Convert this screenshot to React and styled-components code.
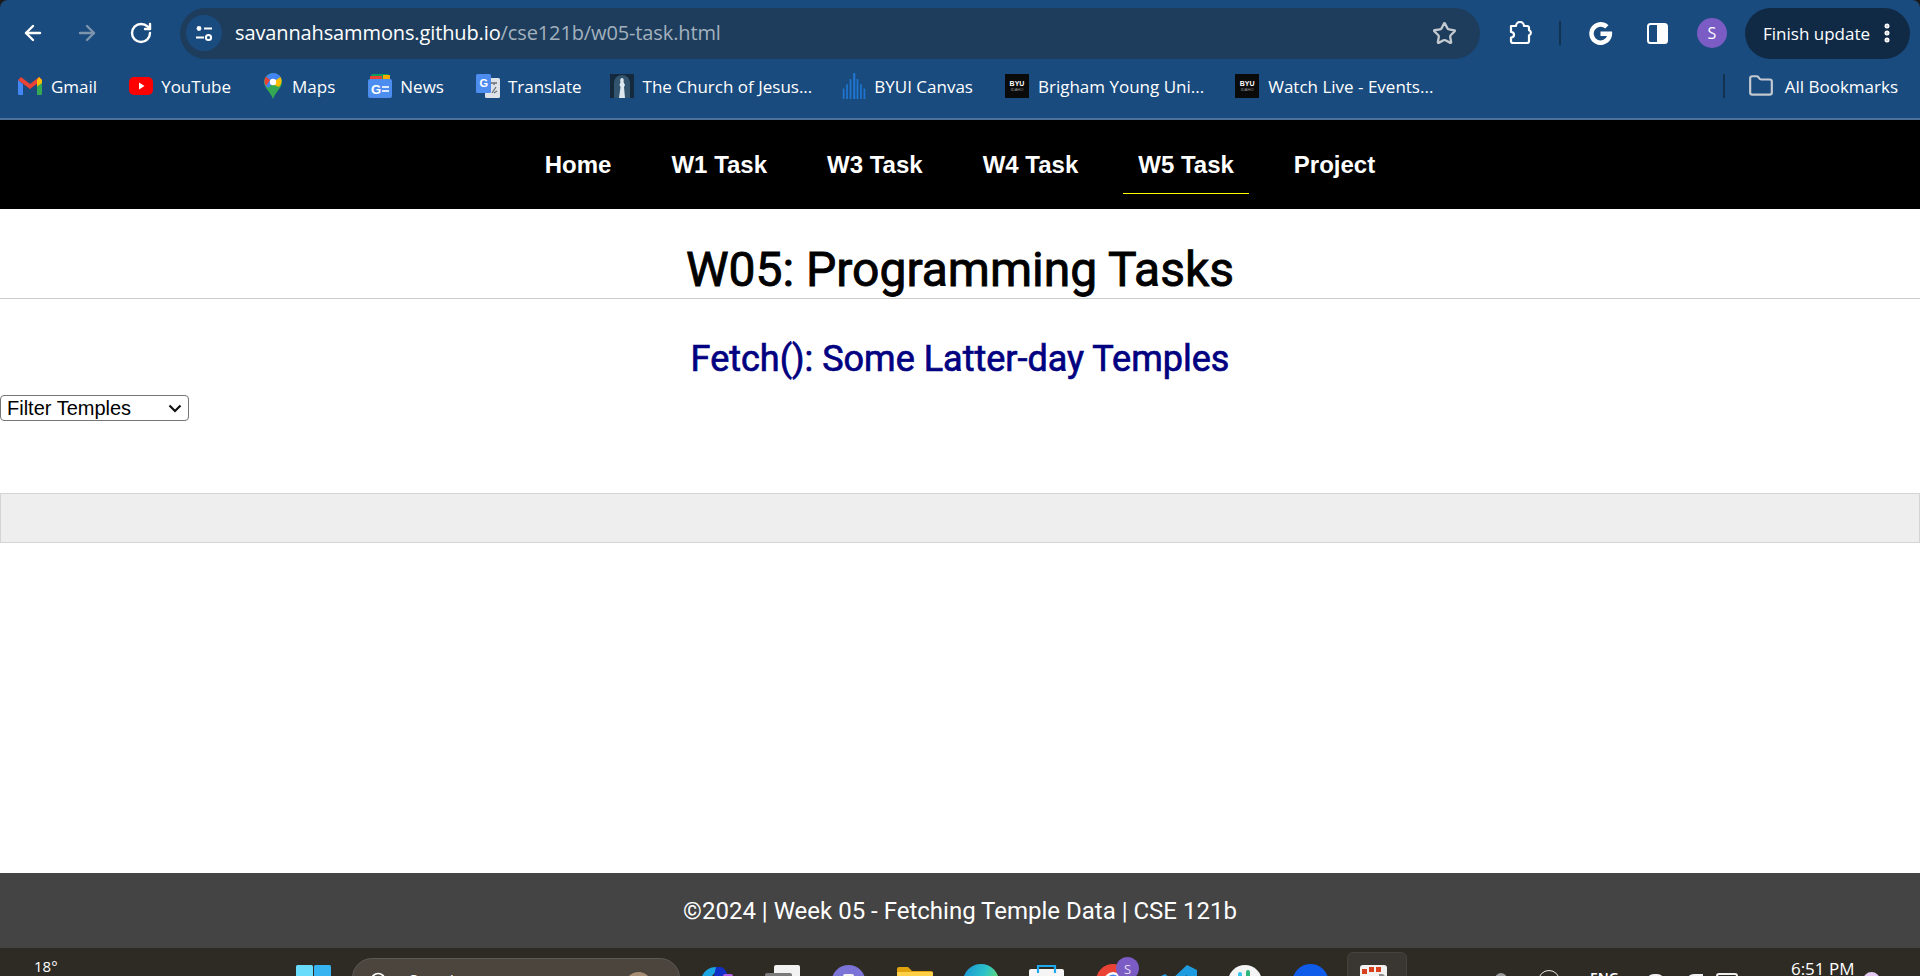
import React from 'react';
import styled, { createGlobalStyle } from 'styled-components';
import { ArrowLeft, ArrowRight, RotateCw, Star, Folder, EllipsisVertical, Search } from 'lucide-react';

const GlobalStyle = createGlobalStyle`
  html, body { margin: 0; padding: 0; height: 100%; overflow: hidden; background: #fff; }
  #root { height: 100%; }
`;

const Page = styled.div`
  height: 976px;
  display: flex;
  flex-direction: column;
  overflow: hidden;
  background: #1b1b1b;
  font-family: "Liberation Sans", Arial, sans-serif;
`;

const BrowserChrome = styled.div`
  height: 120px;
  flex: none;
  box-sizing: border-box;
  background: #1a4b7e;
  border-bottom: 2px solid #4d7098;
  border-radius: 8px 8px 0 0;
  font-family: "Open Sans", sans-serif;
  color: #fff;
`;

const Toolbar = styled.div`
  height: 66px;
  display: flex;
  align-items: center;
  padding: 0 10px 0 21px;
`;

const NavButtons = styled.div`
  display: flex;
  align-items: center;
  gap: 30px;
  width: 159px;
  flex: none;
`;

const Omnibox = styled.div`
  width: 1300px;
  height: 51px;
  flex: none;
  display: flex;
  align-items: center;
  background: #1e3d5c;
  border-radius: 26px;
  padding: 0 23px 0 6px;
  box-sizing: border-box;
  font-size: 20px;
`;

const SiteButton = styled.div`
  width: 36px;
  height: 36px;
  border-radius: 50%;
  background: #1a4b7e;
  display: flex;
  align-items: center;
  justify-content: center;
  margin: 0 13px 0 0;
`;

const Url = styled.div`
  flex: 1;
  letter-spacing: -0.12px;
  margin-top: -2px;
`;

const UrlPath = styled.span`
  color: #a3b1be;
`;

const ToolIcons = styled.div`
  display: flex;
  align-items: center;
  flex: 1;
`;

const ToolSlot = styled.div`
  display: flex;
  margin-left: ${p => p.$ml}px;
`;

const Divider = styled.div`
  width: 2px;
  height: ${p => p.$h}px;
  background: #123252;
  margin-left: ${p => p.$ml};
`;

const Avatar = styled.div`
  width: 30px;
  height: 30px;
  border-radius: 50%;
  background: #7b5cc4;
  font-size: 16px;
  display: flex;
  align-items: center;
  justify-content: center;
  margin-left: 29px;
`;

const UpdatePill = styled.div`
  width: 165px;
  height: 51px;
  margin-left: 18px;
  border-radius: 26px;
  background: #102a46;
  display: flex;
  align-items: center;
  padding-left: 18px;
  box-sizing: border-box;
  font-size: 17px;
  white-space: nowrap;
`;

const BookmarkBar = styled.div`
  height: 44px;
  display: flex;
  align-items: center;
  padding: 0 22px 0 18px;
  font-size: 17px;
  margin-top: -2px;
`;

const Bookmark = styled.div`
  display: flex;
  align-items: center;
  gap: ${p => p.$gap}px;
  margin-right: ${p => p.$mr}px;
  margin-left: ${p => p.$ml || 0}px;
  white-space: nowrap;
`;

const SiteNav = styled.nav`
  height: 89px;
  flex: none;
  background: #000;
  display: flex;
  justify-content: center;
`;

const NavList = styled.div`
  display: flex;
  gap: 30px;
`;

const NavLink = styled.a`
  height: 66px;
  margin-top: 8px;
  padding: 8px 15px 0;
  box-sizing: border-box;
  display: flex;
  align-items: center;
  color: #fff;
  font-weight: 700;
  font-size: 24px;
  border-bottom: ${p => (p.$active ? '1px solid #ffff00' : '0')};
`;

const Content = styled.main`
  flex: 1;
  min-height: 0;
  background: #fff;
  font-family: Roboto, sans-serif;
`;

const Heading = styled.h1`
  margin: 0;
  height: 90px;
  box-sizing: border-box;
  border-bottom: 1px solid #ccc;
  padding-top: 33px;
  text-align: center;
  font-size: 48px;
  line-height: 56px;
  font-weight: 400;
  color: #000;
  -webkit-text-stroke: 0.9px #000;
`;

const SubHeading = styled.h2`
  margin: 0;
  padding-top: 39px;
  text-align: center;
  font-size: 36px;
  line-height: 42px;
  font-weight: 400;
  color: #000080;
  -webkit-text-stroke: 0.7px #000080;
`;

const FilterSelect = styled.select`
  display: block;
  margin: 15px 0 0;
  width: 189px;
  height: 26px;
  appearance: none;
  font-family: "Liberation Sans", Arial, sans-serif;
  font-size: 20px;
  color: #000;
  border: 1px solid #767676;
  border-radius: 4px;
  padding: 0 0 0 6px;
  background: #fff url("data:image/svg+xml,%3Csvg xmlns='http://www.w3.org/2000/svg' width='14' height='9'%3E%3Cpath d='M1.5 1.5 7 7l5.5-5.5' fill='none' stroke='%23111' stroke-width='2.2'/%3E%3C/svg%3E") no-repeat right 6px center;
`;

const TempleBox = styled.div`
  margin-top: 72px;
  height: 50px;
  box-sizing: border-box;
  background: #eee;
  border: 1px solid #d4d4d4;
`;

const Footer = styled.footer`
  height: 75px;
  flex: none;
  background: #444;
  color: #fff;
  font-family: Roboto, sans-serif;
  font-size: 24px;
  display: flex;
  align-items: center;
  justify-content: center;
`;

const Taskbar = styled.div`
  height: 28px;
  flex: none;
  background: #2e2a24;
  color: #fff;
  font-family: "Open Sans", sans-serif;
  display: flex;
  align-items: flex-start;
  overflow: hidden;
`;

const Weather = styled.div`
  width: 296px;
  flex: none;
  padding: 10px 0 0 34px;
  box-sizing: border-box;
  font-size: 15px;
  line-height: 16px;
`;

const SearchPill = styled.div`
  width: 328px;
  height: 40px;
  margin: 10px 0 0 21px;
  flex: none;
  box-sizing: border-box;
  border: 1px solid #5d5a55;
  border-radius: 20px;
  background: #4b453e;
  display: flex;
  align-items: flex-start;
  padding: 12px 0 0 16px;
  gap: 20px;
  font-size: 16px;
  line-height: 20px;
`;

const SearchArt = styled.div`
  width: 27px;
  height: 27px;
  margin: 1px 27px 0 auto;
  border-radius: 50%;
  background: #a58e73;
`;

const TaskIcon = styled.div`
  width: ${p => p.$w}px;
  height: 36px;
  flex: none;
  margin-top: ${p => p.$top}px;
  margin-left: ${p => p.$ml}px;
  position: relative;
`;

const ActiveTile = styled.div`
  width: 60px;
  height: 40px;
  flex: none;
  margin: 4px 0 0 ${p => p.$ml}px;
  box-sizing: border-box;
  padding: 12px 0 0 12px;
  background: #3a3733;
  border: 1px solid #45423e;
  border-radius: 6px;
`;

const Badge = styled.div`
  position: absolute;
  left: 20px;
  top: -7px;
  width: 23px;
  height: 23px;
  border-radius: 50%;
  background: #7b5cc4;
  color: #e8def8;
  font-size: 13px;
  display: flex;
  align-items: center;
  justify-content: center;
`;

const TrayText = styled.div`
  flex: none;
  font-size: 14px;
  font-weight: 600;
  line-height: 18px;
  margin: 21px 0 0 ${p => p.$ml}px;
`;

const Clock = styled.div`
  flex: none;
  margin: 12px 0 0 ${p => p.$ml}px;
  font-size: 17px;
  line-height: 18px;
`;

const Gmail = () => (
  <svg width="24" height="20" viewBox="0 0 24 18">
    <path d="M0 3v13.5A1.5 1.5 0 0 0 1.5 18H5V7z" fill="#4285f4" />
    <path d="M24 3v13.5a1.5 1.5 0 0 1-1.5 1.5H19V7z" fill="#34a853" />
    <path d="M0 3l12 9 12-9-3-3-9 7-9-7z" fill="#ea4335" />
    <path d="M21 0l3 3v3l-5 3.5V3z" fill="#fbbc04" />
  </svg>
);

const YouTube = () => (
  <svg width="24" height="20" viewBox="0 0 24 20">
    <rect y="1" width="24" height="18" rx="5" fill="#f00" />
    <path d="M10 6.5v7l5.5-3.5z" fill="#fff" />
  </svg>
);

const Maps = () => (
  <svg width="18" height="26" viewBox="0 0 18 26">
    <path d="M9 0a9 9 0 0 1 9 9c0 6-6 9-9 17C6 18 0 15 0 9a9 9 0 0 1 9-9z" fill="#34a853" />
    <path d="M9 0a9 9 0 0 1 7.5 4L4 15 1.5 12.5A9 9 0 0 1 9 0z" fill="#4285f4" />
    <path d="M1.8 3.6L6 7 2 13C0 10 0 6 1.8 3.6z" fill="#ea4335" />
    <path d="M16.5 4A9 9 0 0 1 15 14L10 12 12 7z" fill="#fbbc04" />
    <circle cx="9" cy="9" r="3.2" fill="#fff" />
  </svg>
);

const News = () => (
  <svg width="24" height="24" viewBox="0 0 24 24">
    <rect x="3" y="0" width="18" height="6" rx="1.5" fill="#0c9d58" />
    <rect x="15" y="1" width="7" height="6" fill="#f9ab00" />
    <rect x="2" y="2" width="12" height="5" fill="#ea4335" />
    <rect y="5" width="24" height="19" rx="2" fill="#4d8df0" />
    <text x="3" y="20" fontFamily="Liberation Sans" fontWeight="700" fontSize="13" fill="#fff">G</text>
    <path d="M14 12h7v2h-7zm0 4h7v2h-7z" fill="#dbe8fd" />
  </svg>
);

const Translate = () => (
  <svg width="24" height="24" viewBox="0 0 24 24">
    <rect x="9" y="4" width="15" height="20" rx="1.5" fill="#dfe3e8" />
    <rect width="15" height="19" rx="1.5" fill="#4d8df0" />
    <text x="3.5" y="13" fontFamily="Liberation Sans" fontWeight="700" fontSize="11" fill="#fff">G</text>
    <path d="M15 9h6M18 9v2m-2 8l4-6m-2 6l3-2" stroke="#66707a" fill="none" strokeWidth="1.3" />
  </svg>
);

const Church = () => (
  <svg width="24" height="24" viewBox="0 0 24 24">
    <rect width="24" height="24" fill="#15293d" />
    <path d="M4 24V9a8 8 0 0 1 16 0v15z" fill="#33546f" />
    <path d="M12 4c2 0 2 3 1.5 4l1.5 3-1 2 1 11H9l1.5-11-1-2 1-3C10 7 10 4 12 4z" fill="#dfe8ee" />
  </svg>
);

const Canvas = () => (
  <svg width="24" height="26" viewBox="0 0 26 30" fill="#1f75cf">
    <rect x="0" y="18" width="2" height="12" />
    <rect x="4" y="13" width="2" height="17" />
    <rect x="8" y="7" width="2" height="23" />
    <rect x="12" y="0" width="2.5" height="30" />
    <rect x="16" y="7" width="2" height="23" />
    <rect x="20" y="13" width="2" height="17" />
    <rect x="24" y="18" width="2" height="12" />
  </svg>
);

const ByuTile = styled.div`
  width: 24px;
  height: 24px;
  background: #0a0a0a;
  display: flex;
  flex-direction: column;
  align-items: center;
  justify-content: center;
  font-family: "Liberation Sans", sans-serif;
  font-weight: 700;
  font-size: 7px;
  line-height: 7px;
`;

const ByuSmall = styled.span`
  font-size: 4px;
  line-height: 5px;
  font-weight: 400;
  color: #999;
`;

const Byu = () => (
  <ByuTile>
    BYU
    <ByuSmall>IDAHO</ByuSmall>
  </ByuTile>
);

const Tune = () => (
  <svg width="20" height="20" viewBox="0 0 20 20" fill="none" stroke="#fff" strokeWidth="2">
    <path d="M10 5.5h8M2 14.5h8" />
    <circle cx="5" cy="5.5" r="2.4" fill="#fff" stroke="none" />
    <circle cx="14.5" cy="14.5" r="2.6" />
  </svg>
);

const ExtensionPuzzle = () => (
  <svg width="25" height="24" viewBox="0 0 25 24" fill="none" stroke="#fff" strokeWidth="2.2" strokeLinejoin="round">
    <path d="M3 5.5h5a4 4 0 0 1 8 0h3a2 2 0 0 1 2 2v2.2a2.6 2.6 0 0 1 0 5v5.8a2 2 0 0 1-2 2H5a2 2 0 0 1-2-2v-3.5c2 0 3-1.2 3-2.7s-1-2.8-3-2.8z" transform="translate(0 -0.5)" />
  </svg>
);

const GoogleG = () => (
  <svg width="25" height="25" viewBox="0 0 24 24">
    <path d="M23 10H12v4.4h6.3a6.6 6.6 0 1 1-1.8-7.2l3.2-3.2A11 11 0 1 0 23.2 12c0-.7 0-1.4-.2-2z" fill="#fff" />
  </svg>
);

const SidePanel = () => (
  <svg width="21" height="21" viewBox="0 0 21 21">
    <rect x="1" y="1" width="19" height="19" rx="2.5" fill="none" stroke="#fff" strokeWidth="2" />
    <rect x="10" y="1" width="10" height="19" rx="1" fill="#fff" />
  </svg>
);

const WinLogo = () => (
  <svg width="35" height="36" viewBox="0 0 35 36">
    <rect width="17" height="17" rx="1.5" fill="#69dcfb" />
    <rect x="18" width="17" height="17" rx="1.5" fill="#36b4f2" />
    <rect y="18" width="17" height="17" fill="#2ba7e8" />
    <rect x="18" y="18" width="17" height="17" fill="#0f7fd0" />
  </svg>
);

const Copilot = () => (
  <svg width="31" height="36" viewBox="0 0 31 36">
    <path d="M0 9C3 3 8 0 14 0h4L10 9z" fill="#1ba4e0" />
    <path d="M14 0h4c3 0 6 3 8 9H12z" fill="#1230c8" />
    <rect x="21" y="7" width="10" height="8" rx="2" fill="#b05be0" />
  </svg>
);

const Notepad = () => (
  <svg width="35" height="36" viewBox="0 0 35 36">
    <rect x="9" width="26" height="36" rx="2" fill="#f2f2f2" />
    <rect y="8" width="27" height="28" rx="2" fill="#7a7a7a" />
  </svg>
);

const Teams = () => (
  <svg width="33" height="36" viewBox="0 0 33 36">
    <circle cx="16.5" cy="17" r="17" fill="#7b74d6" />
    <rect x="11" y="9" width="11" height="12" rx="2" fill="#f2f2f2" />
  </svg>
);

const FolderApp = () => (
  <svg width="36" height="36" viewBox="0 0 36 36">
    <path d="M0 3a2 2 0 0 1 2-2h9l4 4h19a2 2 0 0 1 2 2v29H0z" fill="#e0a30e" />
    <rect y="6" width="36" height="30" rx="1" fill="#ffcf48" />
  </svg>
);

const EdgeApp = () => (
  <svg width="36" height="36" viewBox="0 0 36 36">
    <defs>
      <linearGradient id="edge" x1="0" x2="1" y1="0" y2="0.4">
        <stop offset="0" stopColor="#1a8fd6" />
        <stop offset="0.6" stopColor="#2bc3c9" />
        <stop offset="1" stopColor="#66dd70" />
      </linearGradient>
    </defs>
    <circle cx="18" cy="18" r="18" fill="url(#edge)" />
  </svg>
);

const StoreApp = () => (
  <svg width="35" height="36" viewBox="0 0 35 36">
    <rect y="4" width="35" height="32" rx="2" fill="#f5f5f5" />
    <path d="M9 8V1h17v7" fill="none" stroke="#1ea9ee" strokeWidth="2.2" />
  </svg>
);

const ChromeApp = () => (
  <svg width="34" height="36" viewBox="0 0 34 36">
    <circle cx="17" cy="17" r="17" fill="#ea4335" />
    <circle cx="17" cy="17" r="9" fill="#fff" />
    <circle cx="17" cy="17" r="6.5" fill="#4285f4" />
  </svg>
);

const VsCode = () => (
  <svg width="36" height="36" viewBox="0 0 36 36">
    <path d="M26 0l10 5v26l-10 5-15-14-7 5-4-2 8-7-8-7 4-2 7 5zm0 10l-8 7 8 7z" fill="#1f9be0" />
  </svg>
);

const Slack = () => (
  <svg width="34" height="36" viewBox="0 0 34 36">
    <circle cx="17" cy="17" r="17" fill="#f4f4f4" />
    <rect x="10" y="7" width="4" height="9" rx="2" fill="#36c5f0" />
    <rect x="18" y="5" width="4" height="10" rx="2" fill="#2eb67d" />
  </svg>
);

const BlueApp = () => (
  <svg width="35" height="36" viewBox="0 0 35 36">
    <circle cx="17.5" cy="18" r="18" fill="#0f5bea" />
  </svg>
);

const SnipApp = () => (
  <svg width="27" height="30" viewBox="0 0 27 30">
    <rect width="27" height="30" rx="3" fill="#f2f2f2" />
    <rect x="2" y="4" width="5" height="5" fill="#d9401e" />
    <rect x="9" y="2" width="5" height="5" fill="#d9401e" />
    <rect x="16" y="2" width="5" height="5" fill="#d9401e" />
    <rect x="2" y="11" width="5" height="5" fill="#d9401e" />
    <path d="M19 9h4l4 4v17h-8z" fill="#8d8d8d" />
  </svg>
);

const TrayDot = styled.div`
  width: ${p => p.$size}px;
  height: ${p => p.$size}px;
  flex: none;
  border-radius: 50%;
  margin: ${p => p.$top}px 0 0 ${p => p.$ml}px;
  background: ${p => p.$bg};
  border: ${p => (p.$ring ? '1.5px solid #e8e8e8' : '0')};
  box-sizing: border-box;
`;

const TrayBox = styled.div`
  width: ${p => p.$w}px;
  height: 14px;
  flex: none;
  margin: ${p => p.$top}px 0 0 ${p => p.$ml}px;
  border: 2px solid #f0f0f0;
  border-radius: ${p => p.$r};
  box-sizing: border-box;
`;

const bookmarks = [
  { icon: <Gmail />, label: 'Gmail', gap: 9, mr: 32 },
  { icon: <YouTube />, label: 'YouTube', gap: 8, mr: 33 },
  { icon: <Maps />, label: 'Maps', gap: 10, mr: 33 },
  { icon: <News />, label: 'News', gap: 8, mr: 32 },
  { icon: <Translate />, label: 'Translate', gap: 8, mr: 28 },
  { icon: <Church />, label: 'The Church of Jesus...', gap: 9, mr: 30 },
  { icon: <Canvas />, label: 'BYUI Canvas', gap: 8, mr: 32 },
  { icon: <Byu />, label: 'Brigham Young Uni...', gap: 9, mr: 31 },
  { icon: <Byu />, label: 'Watch Live - Events...', gap: 9, mr: 0 },
];

const links = ['Home', 'W1 Task', 'W3 Task', 'W4 Task', 'W5 Task', 'Project'];

export default function App() {
  return (
    <Page>
      <GlobalStyle />
      <BrowserChrome>
        <Toolbar>
          <NavButtons>
            <ArrowLeft size={24} strokeWidth={2.4} color="#fff" />
            <ArrowRight size={24} strokeWidth={2.4} color="#7d94ad" />
            <RotateCw size={24} strokeWidth={2.4} color="#fff" />
          </NavButtons>
          <Omnibox>
            <SiteButton><Tune /></SiteButton>
            <Url>savannahsammons.github.io<UrlPath>/cse121b/w05-task.html</UrlPath></Url>
            <Star size={25} strokeWidth={2.2} color="#c4c9cf" />
          </Omnibox>
          <ToolIcons>
            <ToolSlot $ml={28}><ExtensionPuzzle /></ToolSlot>
            <Divider $h={24} $ml="26px" />
            <ToolSlot $ml={27}><GoogleG /></ToolSlot>
            <ToolSlot $ml={34}><SidePanel /></ToolSlot>
            <Avatar>S</Avatar>
          </ToolIcons>
          <UpdatePill>
            Finish update
            <EllipsisVertical size={24} strokeWidth={3} color="#fff" style={{ marginLeft: 5 }} />
          </UpdatePill>
        </Toolbar>
        <BookmarkBar>
          {bookmarks.map(b => (
            <Bookmark key={b.label} $gap={b.gap} $mr={b.mr}>
              {b.icon}
              {b.label}
            </Bookmark>
          ))}
          <Divider $h={24} $ml="auto" />
          <Bookmark $gap={11} $mr={0} $ml={23}>
            <Folder size={26} strokeWidth={2} color="#c3c9cf" />
            All Bookmarks
          </Bookmark>
        </BookmarkBar>
      </BrowserChrome>
      <SiteNav>
        <NavList>
          {links.map(l => (
            <NavLink key={l} $active={l === 'W5 Task'}>{l}</NavLink>
          ))}
        </NavList>
      </SiteNav>
      <Content>
        <Heading>W05: Programming Tasks</Heading>
        <SubHeading>Fetch(): Some Latter-day Temples</SubHeading>
        <FilterSelect defaultValue="">
          <option value="">Filter Temples</option>
        </FilterSelect>
        <TempleBox />
      </Content>
      <Footer>©2024 | Week 05 - Fetching Temple Data | CSE 121b</Footer>
      <Taskbar>
        <Weather>18°</Weather>
        <TaskIcon $w={35} $top={17} $ml={0}><WinLogo /></TaskIcon>
        <SearchPill>
          <Search size={20} strokeWidth={2} color="#fff" />
          Search
          <SearchArt />
        </SearchPill>
        <TaskIcon $w={31} $top={19} $ml={22}><Copilot /></TaskIcon>
        <TaskIcon $w={35} $top={17} $ml={32}><Notepad /></TaskIcon>
        <TaskIcon $w={33} $top={17} $ml={32}><Teams /></TaskIcon>
        <TaskIcon $w={36} $top={18} $ml={32}><FolderApp /></TaskIcon>
        <TaskIcon $w={36} $top={16} $ml={30}><EdgeApp /></TaskIcon>
        <TaskIcon $w={35} $top={17} $ml={30}><StoreApp /></TaskIcon>
        <TaskIcon $w={34} $top={16} $ml={32}>
          <ChromeApp />
          <Badge>S</Badge>
        </TaskIcon>
        <TaskIcon $w={36} $top={17} $ml={31}><VsCode /></TaskIcon>
        <TaskIcon $w={34} $top={17} $ml={31}><Slack /></TaskIcon>
        <TaskIcon $w={35} $top={16} $ml={31}><BlueApp /></TaskIcon>
        <ActiveTile $ml={19}><SnipApp /></ActiveTile>
        <TrayDot $size={12} $top={25} $ml={88} $bg="#9a9a9a" />
        <TrayDot $size={22} $top={22} $ml={31} $bg="transparent" $ring />
        <TrayText $ml={30}>ENG</TrayText>
        <TrayBox $w={19} $top={26} $ml={27} $r="8px 8px 0 0" />
        <TrayBox $w={17} $top={26} $ml={21} $r="8px 0 0 0" />
        <TrayBox $w={22} $top={25} $ml={13} $r="3px" />
        <Clock $ml={53}>6:51 PM</Clock>
        <TrayDot $size={17} $top={24} $ml={8} $bg="#e3c8f0" />
      </Taskbar>
    </Page>
  );
}
